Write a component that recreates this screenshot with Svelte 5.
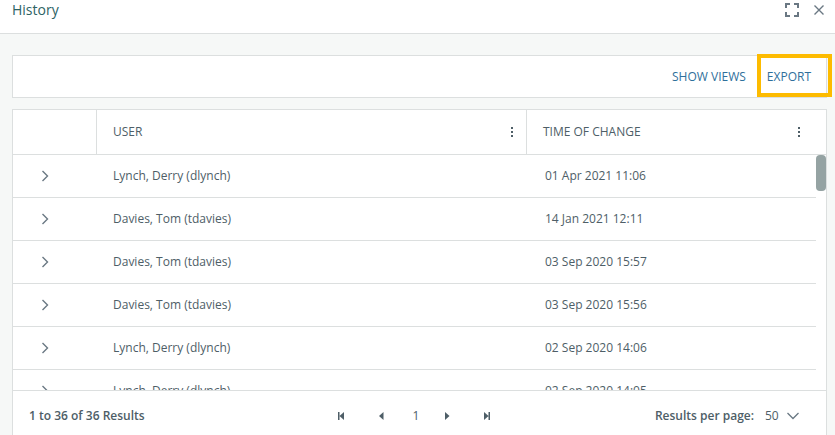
<script>
  const rows = [
    { user: 'Lynch, Derry (dlynch)', time: '01 Apr 2021 11:06' },
    { user: 'Davies, Tom (tdavies)', time: '14 Jan 2021 12:11' },
    { user: 'Davies, Tom (tdavies)', time: '03 Sep 2020 15:57' },
    { user: 'Davies, Tom (tdavies)', time: '03 Sep 2020 15:56' },
    { user: 'Lynch, Derry (dlynch)', time: '02 Sep 2020 14:06' },
    { user: 'Lynch, Derry (dlynch)', time: '02 Sep 2020 14:05' }
  ];

  let perPage = $state('50');
</script>

{#snippet dots()}
  <svg width="4" height="12" viewBox="0 0 4 12" aria-hidden="true">
    <rect x="1" y="1" width="2" height="2" />
    <rect x="1" y="5" width="2" height="2" />
    <rect x="1" y="9" width="2" height="2" />
  </svg>
{/snippet}

<div class="dialog">
  <header class="dialog-header">
    <h1>History</h1>
    <div class="window-buttons">
      <button type="button" aria-label="Full screen">
        <svg width="16" height="16" viewBox="0 0 16 16">
          <path d="M2 6V2h4M10 2h4v4M14 10v4h-4M6 14H2v-4" stroke-width="2" />
        </svg>
      </button>
      <button type="button" aria-label="Close">
        <svg width="12" height="12" viewBox="0 0 12 12">
          <path d="M1.5 1.5l9 9M10.5 1.5l-9 9" stroke-width="1.4" />
        </svg>
      </button>
    </div>
  </header>

  <main class="page">
    <div class="toolbar">
      <button type="button">SHOW VIEWS</button>
      <button type="button" class="highlighted">EXPORT</button>
    </div>

    <section class="panel">
      <div class="scroll-area">
        <table>
          <colgroup>
            <col class="col-expand" />
            <col />
            <col class="col-time" />
            <col class="col-gutter" />
          </colgroup>
          <thead>
            <tr>
              <td></td>
              <th scope="col">
                <div class="heading">
                  USER
                  <button type="button" aria-label="User column menu">{@render dots()}</button>
                </div>
              </th>
              <th scope="col" colspan="2">
                <div class="heading last">
                  TIME OF CHANGE
                  <button type="button" aria-label="Time of change column menu">{@render dots()}</button>
                </div>
              </th>
            </tr>
          </thead>
          <tbody>
            {#each rows as row}
              <tr>
                <td class="expand">
                  <button type="button" aria-label="Expand row">
                    <svg width="8" height="12" viewBox="0 0 8 12">
                      <path d="M1.5 1l5 5-5 5" stroke-width="1.4" />
                    </svg>
                  </button>
                </td>
                <td>{row.user}</td>
                <td class="time">{row.time}</td>
              </tr>
            {/each}
          </tbody>
        </table>
        <div class="thumb"></div>
      </div>

      <footer>
        <div class="results">1 to 36 of 36 Results</div>
        <nav class="pager" aria-label="Pages">
          <button type="button" aria-label="First page">
            <svg class="solid" width="8" height="8" viewBox="0 0 8 8"><path d="M1 0h1.5v8H1zM7 0v8L2.5 4z" /></svg>
          </button>
          <button type="button" aria-label="Previous page">
            <svg class="solid" width="8" height="8" viewBox="0 0 8 8"><path d="M6.5 0v8L2 4z" /></svg>
          </button>
          <span class="current">1</span>
          <button type="button" aria-label="Next page">
            <svg class="solid" width="8" height="8" viewBox="0 0 8 8"><path d="M2 0v8l4.5-4z" /></svg>
          </button>
          <button type="button" aria-label="Last page">
            <svg class="solid" width="8" height="8" viewBox="0 0 8 8"><path d="M5.5 0H7v8H5.5zM1 0v8l4.5-4z" /></svg>
          </button>
        </nav>
        <div class="per-page">
          <label for="per-page">Results per page:</label>
          <div class="select">
            <select id="per-page" bind:value={perPage}>
              <option>25</option>
              <option>50</option>
              <option>75</option>
            </select>
            <svg width="12" height="8" viewBox="0 0 12 8" aria-hidden="true">
              <path d="M0.5 1L6 6.5 11.5 1" stroke-width="1.3" />
            </svg>
          </div>
        </div>
      </footer>
    </section>
  </main>
</div>

<style>
  .dialog {
    display: flex;
    flex-direction: column;
    height: 100vh;
    overflow: hidden;
    background: #f6f8f7;
    color: #4e5e67;
    font-family: "Open Sans", "Noto Sans", sans-serif;
    font-size: 12px;
    line-height: 20px;
  }
  button {
    padding: 0;
    border: none;
    background: none;
    color: inherit;
    font: inherit;
    cursor: pointer;
  }
  svg {
    display: block;
    fill: none;
    stroke: #6a7883;
  }
  .dialog-header {
    display: flex;
    justify-content: space-between;
    padding: 0 10px 13px 12px;
    border-bottom: 1px solid #dcdfdf;
    background: #fff;
  }
  h1 {
    margin: 0;
    color: #2d6364;
    font-size: 14px;
    font-weight: 400;
    line-height: 20px;
  }
  .window-buttons {
    display: flex;
    align-items: center;
    gap: 13px;
  }
  .page {
    display: flex;
    flex: 1;
    flex-direction: column;
    gap: 11px;
    min-height: 0;
    padding: 21px 8px 0 12px;
  }
  .toolbar {
    display: flex;
    align-items: center;
    justify-content: flex-end;
    gap: 21px;
    height: 41px;
    padding-right: 15px;
    border: 1px solid #dcdfdf;
    background: #fff;
    color: #2f6f9b;
    font-weight: 500;
  }
  .highlighted {
    position: relative;
  }
  .highlighted::after {
    content: "";
    position: absolute;
    inset: -13px -21px -10px -10px;
    border: 4px solid #fdbb00;
  }
  .panel {
    display: flex;
    flex: 1;
    flex-direction: column;
    min-height: 0;
    border: 1px solid #dcdfdf;
    border-bottom: none;
    background: #fff;
  }
  .scroll-area {
    position: relative;
    flex: 1;
    min-height: 0;
    overflow: hidden;
  }
  table {
    width: 100%;
    border-spacing: 0;
    table-layout: fixed;
  }
  .col-expand {
    width: 84px;
  }
  .col-time {
    width: 289px;
  }
  .col-gutter {
    width: 10px;
  }
  th,
  td {
    box-sizing: border-box;
    height: 43px;
    padding: 0 0 0 16px;
    border-bottom: 1px solid #dcdfdf;
    text-align: left;
  }
  thead th,
  thead td {
    height: 45px;
    border-right: 1px solid #dcdfdf;
    font-weight: 500;
  }
  thead th:last-child {
    border-right: none;
  }
  .heading {
    display: flex;
    align-items: center;
    justify-content: space-between;
    padding-right: 12px;
  }
  .heading.last {
    padding-right: 25px;
  }
  .heading svg {
    fill: #4e5e67;
    stroke: none;
  }
  .expand {
    padding-left: 28px;
  }
  .expand button {
    display: block;
  }
  .time {
    padding-left: 18px;
  }
  .thumb {
    position: absolute;
    top: 45px;
    right: 0;
    width: 10px;
    height: 36px;
    border-radius: 4px;
    background: #95a3a3;
  }
  footer {
    box-sizing: border-box;
    display: grid;
    grid-template-columns: 1fr auto 1fr;
    align-items: center;
    height: 45px;
    padding: 6px 27px 0 16px;
    border-top: 1px solid #dcdfdf;
  }
  .results,
  .per-page label {
    font-weight: 600;
  }
  .pager {
    display: flex;
    align-items: center;
    gap: 32px;
  }
  .current {
    margin: 0 -8px 0 -4px;
  }
  .solid {
    fill: #4e5e67;
    stroke: none;
  }
  .per-page {
    display: flex;
    justify-content: flex-end;
    gap: 11px;
  }
  .select {
    display: flex;
    align-items: center;
    gap: 8px;
  }
  select {
    padding: 0;
    border: none;
    background: none;
    color: inherit;
    font: inherit;
    line-height: 20px;
    appearance: none;
  }
</style>
